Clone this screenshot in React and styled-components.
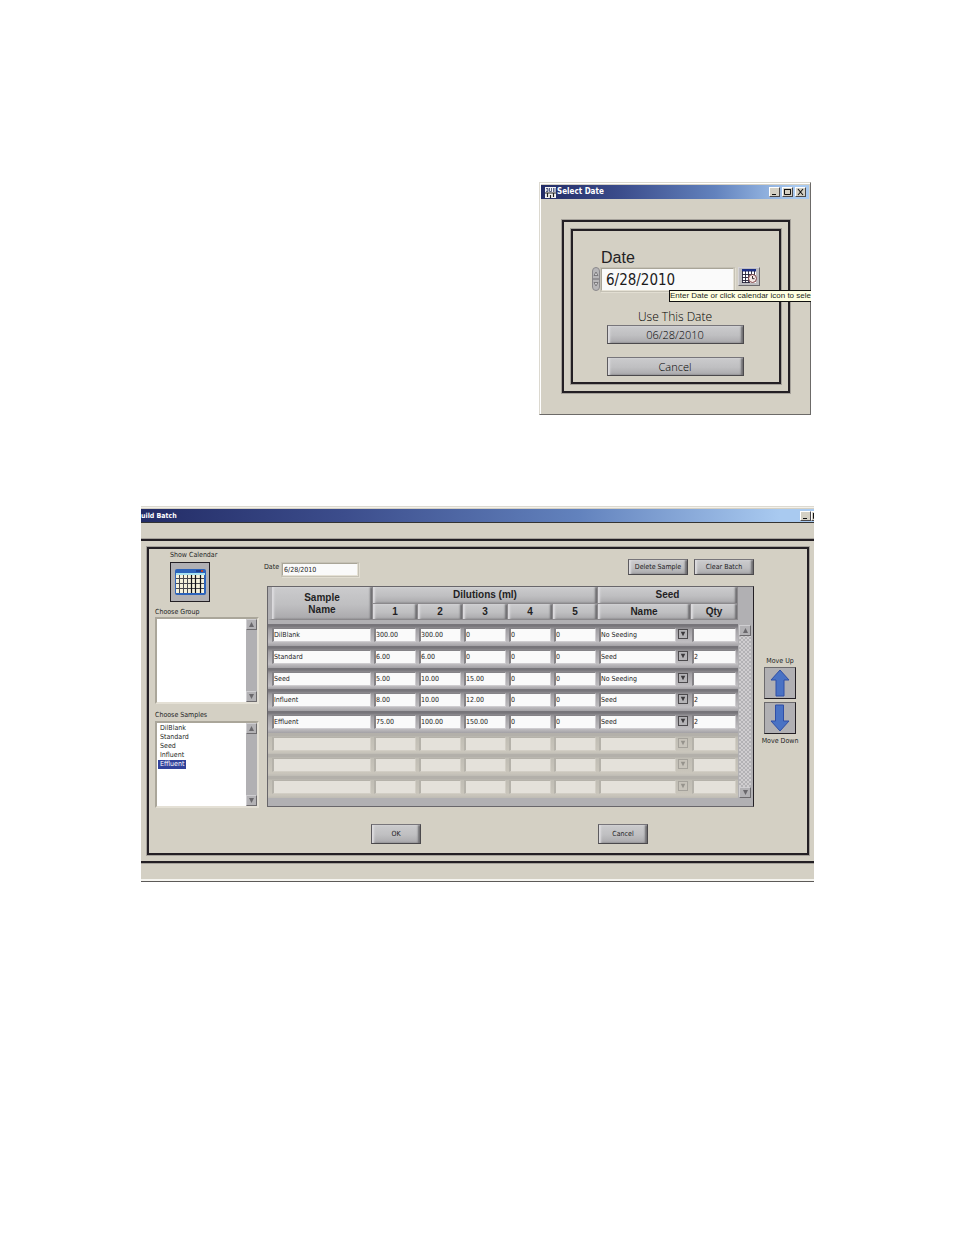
import React from "react";
import styled, { createGlobalStyle, css } from "styled-components";

const GlobalStyle = createGlobalStyle`
  *, *::before, *::after { box-sizing: border-box; }
  body { margin: 0; background: #fff; }
  body, button, input, select { font-family: "DejaVu Sans Condensed", "Noto Sans", sans-serif; }
  button, input, select { margin: 0; border-radius: 0; color: #1c1a1c; outline: none; }
`;

const beige = "#d4d0c4";
const steel = "#b1b0b3";
const ink = "#231f24";

const Page = styled.main`
  display: flex;
  flex-direction: column;
  padding: 182px 140px 40px 141px;
  color: ${ink};
  font-size: 7px;
  line-height: 9px;
`;

/* ---------- shared window parts ---------- */

const TitleBar = styled.header`
  display: flex;
  align-items: center;
  height: ${(p) => p.$height}px;
  background: linear-gradient(90deg, #232c66, #3c4d8c 30%, #6282bd 65%, #a9caf0 95%);
  color: #fff;
  overflow: hidden;
`;

const Title = styled.h1`
  flex: 1;
  margin: 0;
  font-size: ${(p) => p.$size}px;
  line-height: 12px;
  font-weight: 700;
  white-space: nowrap;
`;

const WindowButton = styled.button`
  flex: none;
  display: block;
  width: 11px;
  height: 10px;
  padding: 0;
  background: ${beige};
  border: 1px solid;
  border-color: #fff #4a484a #4a484a #fff;
  svg { display: block; width: 9px; height: 8px; }
`;

const WindowButtons = styled.div`
  display: flex;
  flex: none;
  gap: ${(p) => p.$gap}px;
  width: ${(p) => p.$width}px;
  overflow: hidden;
`;

const Minimize = () => (
  <WindowButton aria-label="Minimize">
    <svg viewBox="0 0 9 8"><path d="M2 6.500h4" stroke="#111" /></svg>
  </WindowButton>
);
const Maximize = () => (
  <WindowButton aria-label="Maximize">
    <svg viewBox="0 0 9 8"><path d="M1.500 1v5.500h6V1M1 1.500h7" stroke="#111" fill="none" /></svg>
  </WindowButton>
);
const Close = () => (
  <WindowButton aria-label="Close">
    <svg viewBox="0 0 9 8"><path d="M2 1l5 6M7 1l-5 6" stroke="#111" strokeWidth="1.100" /></svg>
  </WindowButton>
);

const bevel = css`
  background: linear-gradient(180deg, #cbcbcd, #bfbfc1 55%, #aaa9ac);
  border: 1px solid;
  border-color: #77757a #4b494c #4b494c #5d5b5f;
  box-shadow: inset 3px 1px 2px -1px #dddcdf, inset -3px -1px 2px -1px #6f6e71;
`;

const BevelButton = styled.button`
  ${bevel}
  display: block;
  flex: none;
  width: ${(p) => p.$width}px;
  height: ${(p) => p.$height}px;
  padding: 0;
  font-size: ${(p) => p.$size || 7}px;
  line-height: ${(p) => p.$height - 2}px;
  text-align: center;
  white-space: nowrap;
  ${(p) => p.$size && css`font-family: "Open Sans", sans-serif; font-weight: 300; color: #000;`}
`;

const sunken = css`
  border: 1px solid;
  border-color: #a9a598 #e6e2d6 #e6e2d6 #a9a598;
  box-shadow: 0 0 0 1px #c5c1b5, 1px 1px 0 1px #e2ded2;
`;

/* ---------- Select Date ---------- */

const Dialog = styled.section`
  align-self: flex-end;
  position: relative;
  width: 272px;
  margin-right: 3px;
  padding: 1px 1px 21px;
  background: ${beige};
  border: 1px solid;
  border-color: #dcd9d0 #6c6a68 #6c6a68 #dcd9d0;
  box-shadow: inset 1px 1px 0 #fff;
`;

const DialogTitleBar = styled(TitleBar)`
  margin-top: 1px;
  padding: 0 3px 0 4px;
  gap: 1px;
`;

const OuterFrame = styled.div`
  margin: 21px 19px 0 21px;
  padding: 7px;
  border: 2px solid ${ink};
  box-shadow: 0 0 0 1px #a5a19a;
`;

const InnerFrame = styled.div`
  padding: 17px 19px 6px 19px;
  border: 2px solid ${ink};
  box-shadow: 0 0 0 1px #a5a19a;
`;

const DateLabel = styled.label`
  display: block;
  padding-left: 9px;
  font: 16px/19px "Liberation Sans", Arial, sans-serif;
`;

const DateRow = styled.div`
  display: flex;
  align-items: flex-start;
`;

const Spinner = styled.div`
  width: 9px;
  height: 26px;
  svg { display: block; }
`;

const DateInput = styled.input`
  ${sunken}
  flex: 1;
  min-width: 0;
  width: 100%;
  height: 23px;
  margin: 1px 4px 0 0;
  padding: 0 0 0 4px;
  background: #fafafa;
  font-size: 15px;
`;

const CalendarButton = styled.button`
  flex: none;
  width: 22px;
  height: 19px;
  padding: 1px 3px;
  background: #bdbcbf;
  border: 1px solid;
  border-color: #d7d5d8 #6b696c #6b696c #d7d5d8;
  svg { display: block; }
`;

const Tooltip = styled.div`
  position: absolute;
  top: 107px;
  right: -1px;
  left: 129px;
  height: 12px;
  background: #ffffe1;
  border: 1px solid #111;
  border-right: 0;
  font-size: 8px;
  line-height: 10px;
  white-space: nowrap;
  font-family: "Liberation Sans", Arial, sans-serif;
`;

const Actions = styled.div`
  display: flex;
  flex-direction: column;
  align-items: center;
  padding: 16px 2px 0 0;
`;

const ActionCaption = styled.div`
  color: #000;
  font: 300 12px/16px "Open Sans", sans-serif;
`;

const ActionGap = styled.div`
  height: 13px;
`;

/* ---------- Build Batch ---------- */

const Batch = styled.section`
  margin-top: 91px;
  background: ${beige};
  border-top: 1px solid #dcd9d0;
  border-bottom: 1px solid #5c5a58;
  box-shadow: inset 0 1px 0 #f2f0ea, inset 0 -2px 0 #f6f5f0;
  padding: 2px 0 18px;
  overflow: hidden;
`;

const BatchTitleBar = styled(TitleBar)`
  border-bottom: 1px solid #333;
`;

const BatchBody = styled.div`
  margin-top: 16px;
  padding: 6px 5px 6px 6px;
  border: solid ${ink};
  border-width: 2px 0;
  box-shadow: 0 -1px 0 #a5a19a, 0 1px 0 #a5a19a;
`;

const BatchFrame = styled.div`
  display: grid;
  grid-template-columns: 104px minmax(0, 1fr) 48px;
  column-gap: 5px;
  padding: 1px 0 9px 6px;
  border: 2px solid ${ink};
  box-shadow: 0 0 0 1px #a5a19a;
`;

const SideColumn = styled.div`
  display: flex;
  flex-direction: column;
`;

const CalendarBlock = styled.div`
  padding-left: 15px;
`;

const PictureButton = styled.button`
  display: block;
  width: ${(p) => p.$size}px;
  height: ${(p) => p.$size}px;
  padding: 0;
  background: ${steel};
  border: 1px solid;
  border-color: ${(p) => (p.$flat ? ink : `#6c6a6d ${ink} ${ink} #6c6a6d`)};
  svg { display: block; margin: auto; }
`;

const Caption = styled.div`
  display: flex;
  align-items: ${(p) => p.$align || "flex-start"};
  height: ${(p) => p.$height}px;
  line-height: 10px;
  white-space: nowrap;
`;

const ListBox = styled.div`
  display: flex;
  height: 87px;
  margin-bottom: ${(p) => p.$gap || 0}px;
  background: #fff;
  border: 2px solid;
  border-color: #aaa69a #e4e0d5 #e4e0d5 #aaa69a;
`;

const List = styled.ul`
  flex: 1;
  margin: 0;
  padding: 1px 0 0 1px;
  list-style: none;
`;

const ListItem = styled.li`
  width: fit-content;
  padding: 0 2px;
  line-height: 9px;
  ${(p) => p.$selected && css`background: #31429b; color: #fff;`}
`;

const ScrollTrack = styled.div`
  display: flex;
  flex: none;
  flex-direction: column;
  justify-content: space-between;
  width: 11px;
  background: ${steel};
  ${(p) => p.$dotted && css`
    width: 12px;
    background: repeating-conic-gradient(#b3b2b5 0 25%, #d0ced0 0 50%) 0 0 / 4px 4px;
  `}
`;

const ScrollButton = styled.button`
  width: 100%;
  height: 11px;
  padding: 0;
  background: #b3b2b5;
  border: 1px solid;
  border-color: #cfced1 #6d6b6e #6d6b6e #cfced1;
  svg { display: block; margin: auto; }
`;

const CenterColumn = styled.div`
  display: flex;
  flex-direction: column;
`;

const Toolbar = styled.div`
  display: flex;
  gap: 6px;
  padding-top: 9px;
  height: 36px;
`;

const DateField = styled.div`
  display: flex;
  flex: 1;
  gap: 3px;
  padding-top: 4px;
`;

const SmallDateInput = styled.input`
  ${sunken}
  width: 76px;
  height: 13px;
  padding: 0 0 0 1px;
  background: #fafafa;
  font-size: 7px;
`;

const TablePanel = styled.div`
  display: flex;
  height: 221px;
  margin-left: 3px;
  padding-right: 2px;
  background: ${steel};
  border: 1px solid;
  border-color: #68666a ${ink} #68666a #68666a;
`;

const TableHolder = styled.div`
  flex: 1;
  min-width: 0;
`;

const TableScroll = styled.div`
  display: flex;
  padding: 38px 0 8px 1px;
`;

const Table = styled.table`
  width: 100%;
  table-layout: fixed;
  border-collapse: separate;
  border-spacing: 0;
`;

const HeadCell = styled.th`
  ${bevel}
  height: ${(p) => (p.rowSpan === 2 ? 33 : 16)}px;
  padding: 1px 0 0;
  border-width: 0 1px 1px 0;
  border-color: #8b898c;
  font: 700 10px/12px "Liberation Sans", Arial, sans-serif;
  text-align: center;
  ${(p) => p.rowSpan === 2 && css`border-left: 4px solid ${steel};`}
`;

const Spacer = styled.td`
  height: 4px;
  padding: 0;
`;

const Row = styled.tr`
  height: 22px;
  &:nth-child(3n) { height: 21px; }
  background: ${(p) =>
    p.$off
      ? "linear-gradient(180deg, #b3b0aa 0 3px, #c0bdb4 4px, #cac6bc 19px, #bebbb4)"
      : "linear-gradient(180deg, #77757a 0 2px, #8f8d91 4px, #a19fa3 6px, #c0bec1 18px, #a3a1a5)"};
`;

const Cell = styled.td`
  padding: 4px 2px 3px 1px;
  vertical-align: top;
  &:first-child { padding-left: 4px; }
`;

const field = css`
  display: block;
  width: 100%;
  min-width: 0;
  height: 14px;
  padding: 0;
  appearance: none;
  background: #fafafa;
  border: solid;
  border-width: 1px 1px 1px 2px;
  border-color: #858387 #cfcdd0 #cfcdd0 #858387;
  font-size: 7px;
  line-height: 12px;
  &:disabled {
    background: #e4e1da;
    border-color: #b5b2aa #d2cec5 #d2cec5 #b5b2aa;
    opacity: 1;
  }
`;

const CellInput = styled.input`${field}`;
const CellSelect = styled.select`${field}`;

const SelectRow = styled.div`
  display: flex;
  gap: 2px;
  padding-right: 1px;
`;

const DropArrow = styled.span`
  flex: none;
  width: 10px;
  height: 10px;
  margin-top: 1px;
  pointer-events: none;
  background: ${(p) => (p.$off ? "#c8c4bb" : "#b5b4b7")};
  border: 1px solid ${(p) => (p.$off ? "#a5a29b" : "#4c4a4d")};
  svg { display: block; }
`;

const Footer = styled.div`
  display: flex;
  justify-content: space-between;
  padding: 17px 106px 0 107px;
`;

const MoveColumn = styled.div`
  display: flex;
  flex-direction: column;
  align-items: flex-start;
  gap: 3px;
  padding: 107px 0 0 5px;
`;

const MoveCaption = styled.div`
  width: 32px;
  display: flex;
  justify-content: center;
  height: ${(p) => p.$height}px;
  white-space: nowrap;
`;

/* ---------- drawings ---------- */

const AppIcon = () => (
  <svg width="11" height="11" viewBox="0 0 11 11" aria-hidden="true">
    <path d="M0 0h11v11H0z" fill="#f4f4f4" />
    <path d="M1 1.500h2v3H1M1.500 3h1.500M4.500 1v3.500h2V1M8.500 1v4M10 1v4" stroke="#33406f" fill="none" strokeWidth=".8" />
    <path d="M0 6h11" stroke="#222" />
    <path d="M2.500 6v4M5.500 8v3M8.500 6v4" stroke="#222" strokeWidth="1.200" />
  </svg>
);

const SmallCalendar = () => (
  <svg width="15" height="15" viewBox="0 0 15 15" aria-hidden="true">
    <path d="M0 0h14v14H0z" fill="#fff" />
    <path d="M0 0h14v2.500H0z" fill="#1d2f86" />
    <path d="M.5 2v12M3.500 2v12M6.500 2v12M9.500 2v5M12.500 2v3M0 5.500h13M0 8.500h7M0 11.500h7M0 13.500h8" stroke="#26243a" strokeWidth=".9" />
    <circle cx="10.500" cy="9.500" r="4" fill="#f6e9e6" stroke="#7c3f42" />
    <path d="M10.500 7v2.700h2" stroke="#33262a" fill="none" />
  </svg>
);

const LargeCalendar = () => (
  <svg width="31" height="26" viewBox="0 0 31 26" aria-hidden="true">
    <rect x="0" y="0" width="31" height="26" rx="2" fill="#2c63bb" />
    <path d="M1 4h29v2H1z" fill="#a6e2f2" />
    <path d="M21 1h7v2h-7z" fill="#1e3f8e" />
    <path d="M26 1h2v2h-2z" fill="#b5442f" />
    <path d="M1 6h28v18H1z" fill="#f6f2dc" />
    <path d="M4.500 6v18M8.500 6v18M12.500 6v18M1 9.500h28M1 14.500h28M1 19.500h28" stroke="#4a4a50" strokeWidth="1" />
    <path d="M16.500 6v18M20.500 6v18M25.500 6v18" stroke="#111116" strokeWidth="1.200" />
  </svg>
);

const SpinnerArt = () => (
  <svg width="8" height="25" viewBox="0 0 8 25" aria-hidden="true">
    <rect x=".5" y=".5" width="7" height="23" rx="3.500" fill="#b7b6b8" stroke="#8a888b" />
    <path d="M1 12h6" stroke="#6f6d70" />
    <path d="M2 8.500L4 5l2 3.500zM2 15.500h4L4 19z" stroke="#6b696c" fill="#d4d3d5" strokeWidth=".8" />
  </svg>
);

const Chevron = ({ up, color = "#6a686c", size = 9 }) => (
  <svg width={size} height={size} viewBox="0 0 9 9" aria-hidden="true">
    <path d={up ? "M4.500 2L7 7H2z" : "M4.500 7L2 2h5z"} fill={color} />
  </svg>
);

const BlueArrow = ({ down }) => (
  <svg width="20" height="28" viewBox="0 0 20 28" aria-hidden="true">
    <path
      d={down ? "M5.500 1h8v16h5.500L10 27 1 17h4.500z" : "M10 1l9 10h-5v16H6V11H1z"}
      fill="#4a72c4"
      stroke="#2f4ea6"
    />
  </svg>
);

/* ---------- data ---------- */

const samples = ["DilBlank", "Standard", "Seed", "Influent", "Effluent"];

const rows = [
  ["DilBlank", "300.00", "300.00", "0", "0", "0", "No Seeding", ""],
  ["Standard", "6.00", "6.00", "0", "0", "0", "Seed", "2"],
  ["Seed", "5.00", "10.00", "15.00", "0", "0", "No Seeding", ""],
  ["Influent", "8.00", "10.00", "12.00", "0", "0", "Seed", "2"],
  ["Effluent", "75.00", "100.00", "150.00", "0", "0", "Seed", "2"],
  null,
  null,
  null,
];

const columns = ["Sample name", "Dilution 1", "Dilution 2", "Dilution 3", "Dilution 4", "Dilution 5", "Seed name", "Seed quantity"];

function Scrollbar({ dotted }) {
  return (
    <ScrollTrack $dotted={dotted}>
      <ScrollButton aria-label="Scroll up"><Chevron up /></ScrollButton>
      <ScrollButton aria-label="Scroll down"><Chevron /></ScrollButton>
    </ScrollTrack>
  );
}

function SampleRow({ values, index }) {
  const off = !values;
  return (
    <Row $off={off}>
      {columns.map((name, c) => {
        const value = off ? "" : values[c];
        const label = `${name}, row ${index + 1}`;
        return (
          <Cell key={name}>
            {c === 6 ? (
              <SelectRow>
                <CellSelect aria-label={label} defaultValue={value} disabled={off}>
                  {off ? <option value="" /> : ["No Seeding", "Seed"].map((o) => <option key={o}>{o}</option>)}
                </CellSelect>
                <DropArrow $off={off}><Chevron size={8} color={off ? "#96938c" : "#3b393c"} /></DropArrow>
              </SelectRow>
            ) : (
              <CellInput aria-label={label} defaultValue={value} disabled={off} />
            )}
          </Cell>
        );
      })}
    </Row>
  );
}

function SelectDate() {
  return (
    <Dialog aria-label="Select Date">
      <DialogTitleBar $height={14}>
        <AppIcon />
        <Title $size={8}>Select Date</Title>
        <WindowButtons $gap={2} $width={37}>
          <Minimize />
          <Maximize />
          <Close />
        </WindowButtons>
      </DialogTitleBar>
      <OuterFrame>
        <InnerFrame>
          <DateLabel htmlFor="date">Date</DateLabel>
          <DateRow>
            <Spinner><SpinnerArt /></Spinner>
            <DateInput id="date" defaultValue="6/28/2010" />
            <CalendarButton aria-label="Open calendar"><SmallCalendar /></CalendarButton>
          </DateRow>
          <Actions>
            <ActionCaption>Use This Date</ActionCaption>
            <BevelButton $width={137} $height={19} $size={11}>06/28/2010</BevelButton>
            <ActionGap />
            <BevelButton $width={137} $height={19} $size={11}>Cancel</BevelButton>
          </Actions>
        </InnerFrame>
      </OuterFrame>
      <Tooltip role="tooltip">Enter Date or click calendar icon to sele</Tooltip>
    </Dialog>
  );
}

function BuildBatch() {
  return (
    <Batch aria-label="Build Batch">
      <BatchTitleBar $height={14}>
        <Title $size={7}>uild Batch</Title>
        <WindowButtons $gap={0} $width={14}>
          <Minimize />
          <Maximize />
        </WindowButtons>
      </BatchTitleBar>
      <BatchBody>
        <BatchFrame>
          <SideColumn>
            <CalendarBlock>
              <Caption $height={12}>Show Calendar</Caption>
              <PictureButton $size={40} $flat aria-label="Show Calendar"><LargeCalendar /></PictureButton>
            </CalendarBlock>
            <Caption $height={15} $align="flex-end">Choose Group</Caption>
            <ListBox $gap={6}>
              <List role="listbox" aria-label="Choose Group" />
              <Scrollbar />
            </ListBox>
            <Caption $height={11}>Choose Samples</Caption>
            <ListBox>
              <List role="listbox" aria-label="Choose Samples">
                {samples.map((s) => (
                  <ListItem key={s} role="option" aria-selected={s === "Effluent"} $selected={s === "Effluent"}>{s}</ListItem>
                ))}
              </List>
              <Scrollbar />
            </ListBox>
          </SideColumn>

          <CenterColumn>
            <Toolbar>
              <DateField>
                <label htmlFor="batch-date">Date</label>
                <SmallDateInput id="batch-date" defaultValue="6/28/2010" />
              </DateField>
              <BevelButton $width={60} $height={16}>Delete Sample</BevelButton>
              <BevelButton $width={60} $height={16}>Clear Batch</BevelButton>
            </Toolbar>
            <TablePanel>
              <TableHolder>
                <Table>
                  <colgroup>
                    <col />
                    {[1, 2, 3, 4, 5].map((n) => <col key={n} width="45" />)}
                    <col width="93" />
                    <col width="47" />
                  </colgroup>
                  <thead>
                    <tr>
                      <HeadCell rowSpan={2}>Sample<br />Name</HeadCell>
                      <HeadCell colSpan={5}>Dilutions (ml)</HeadCell>
                      <HeadCell colSpan={2}>Seed</HeadCell>
                    </tr>
                    <tr>
                      {["1", "2", "3", "4", "5", "Name", "Qty"].map((h) => <HeadCell key={h}>{h}</HeadCell>)}
                    </tr>
                    <tr><Spacer colSpan={8} /></tr>
                  </thead>
                  <tbody>
                    {rows.map((r, i) => <SampleRow key={i} values={r} index={i} />)}
                  </tbody>
                </Table>
              </TableHolder>
              <TableScroll><Scrollbar dotted /></TableScroll>
            </TablePanel>
            <Footer>
              <BevelButton $width={50} $height={20}>OK</BevelButton>
              <BevelButton $width={50} $height={20}>Cancel</BevelButton>
            </Footer>
          </CenterColumn>

          <MoveColumn>
            <MoveCaption $height={7}>Move Up</MoveCaption>
            <PictureButton $size={32} aria-label="Move Up"><BlueArrow /></PictureButton>
            <PictureButton $size={32} aria-label="Move Down"><BlueArrow down /></PictureButton>
            <MoveCaption $height={9}>Move Down</MoveCaption>
          </MoveColumn>
        </BatchFrame>
      </BatchBody>
    </Batch>
  );
}

export default function App() {
  return (
    <>
      <GlobalStyle />
      <Page>
        <SelectDate />
        <BuildBatch />
      </Page>
    </>
  );
}
